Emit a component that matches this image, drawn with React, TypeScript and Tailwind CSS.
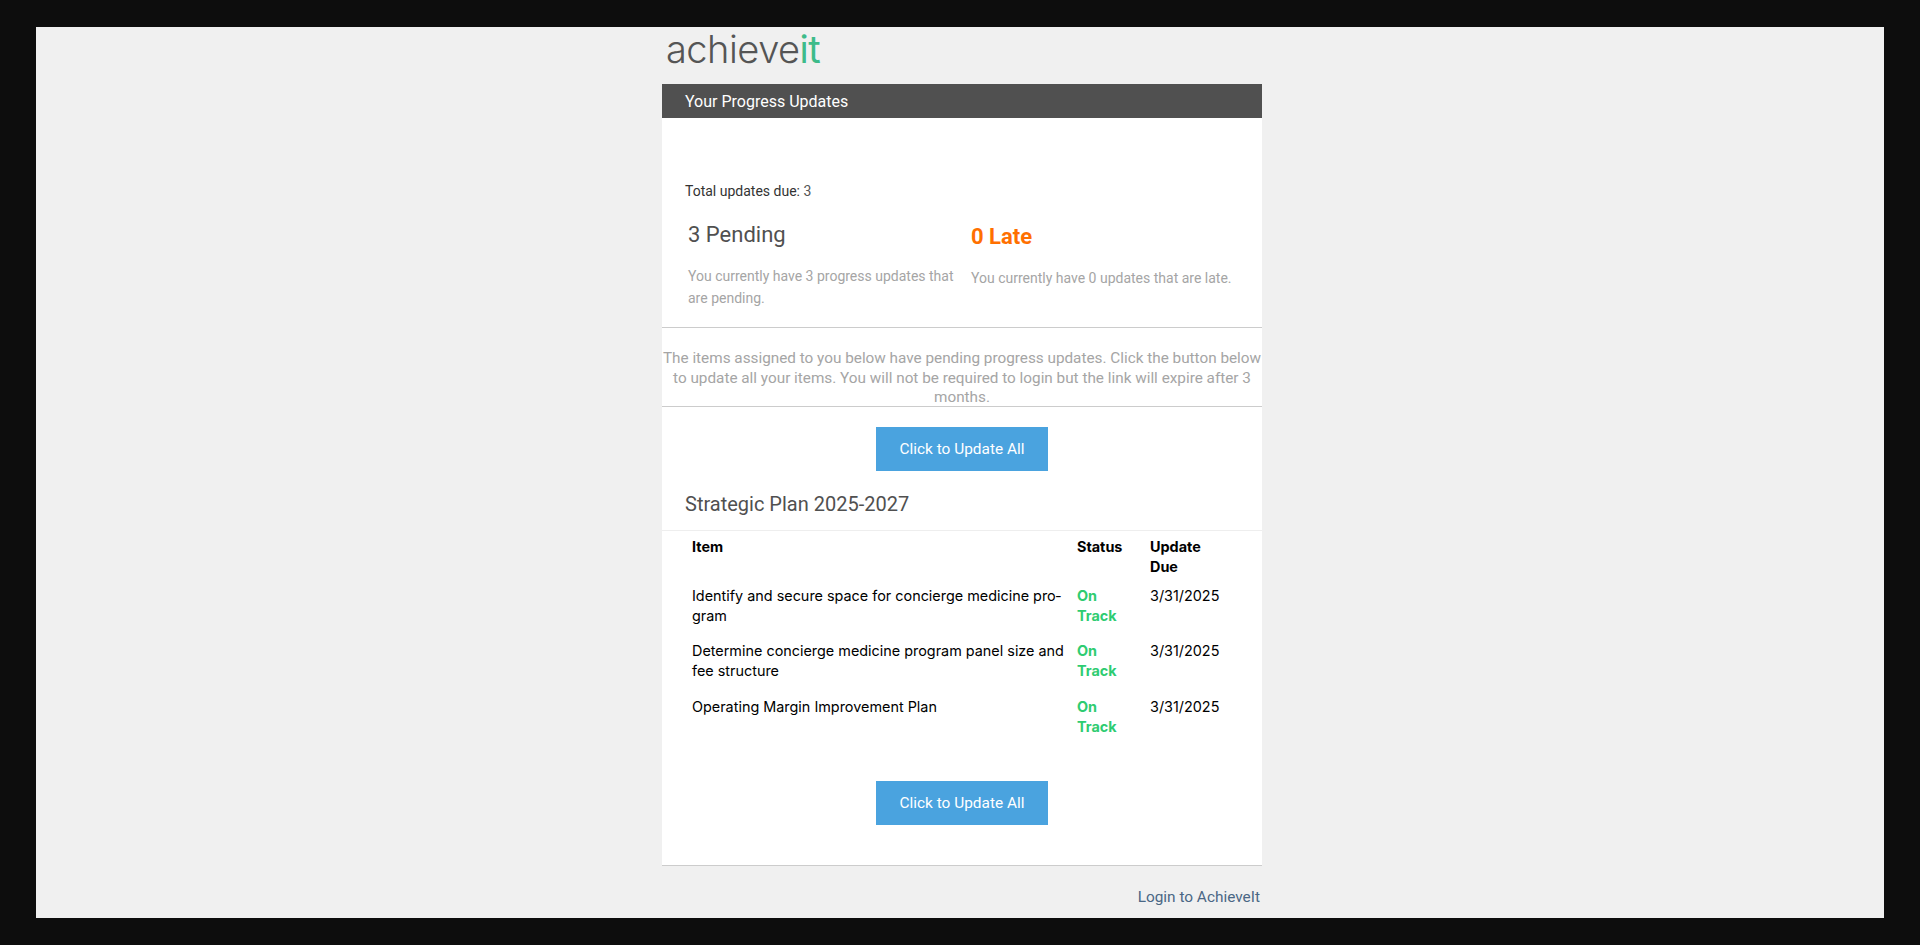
const rows = [
  ["Identify and secure space for concierge medicine pro\u00ADgram", "3/31/2025"],
  ["Determine concierge medicine program panel size and fee structure", "3/31/2025"],
  ["Operating Margin Improvement Plan", "3/31/2025"],
];

function UpdateButton() {
  return (
    <div className="flex justify-center">
      <a className="flex h-[44px] w-[172px] items-center justify-center bg-[#4aa3df] pt-[2px] text-[15.4px] text-white">Click to Update All</a>
    </div>
  );
}

export default function App() {
  return (
    <div className="h-[945px] overflow-hidden bg-[#0d0d0d] px-[36px] pt-[27px] font-['Roboto',sans-serif]">
      <div className="h-[891px] overflow-hidden bg-[#f0f0f0]">
        <div className="ml-[626px] w-[600px]">
          <div className="flex h-[57px] items-start pl-[4px] font-['Inter',sans-serif] text-[38px] leading-[44px] font-light tracking-[-0.5px] text-[#555555]">
            <span>achieve</span><span className="font-normal text-[#3dbb8a]">it</span>
          </div>
          <div className="flex h-[34px] items-center bg-[#505050] pl-[23px] pt-[2px] text-[16px] text-white">Your Progress Updates</div>
          <div className="bg-white">
            <div className="h-[210px] border-b border-[#cccccc]">
              <div className="pl-[23px] pt-[63px] text-[14px] leading-[20px] text-[#333333]">Total updates due: <span className="text-[#555555]">3</span></div>
              <div className="flex pl-[26px] pt-[20px]">
                <div className="w-[283px] pr-[10px]">
                  <div className="text-[22px] leading-[28px] text-[#505050]">3 Pending</div>
                  <p className="mt-[16px] text-[14px] leading-[22px] text-[#a5a5a5]">You currently have 3 progress updates that are pending.</p>
                </div>
                <div className="pt-[2px]">
                  <div className="text-[22px] leading-[28px] font-bold text-[#ff7000]">0 Late</div>
                  <p className="mt-[16px] text-[14px] leading-[22px] text-[#a5a5a5]">You currently have 0 updates that are late.</p>
                </div>
              </div>
            </div>
            <div className="h-[79px] border-b border-[#cccccc] pt-[21px]">
              <p className="text-center text-[15.3px] leading-[19.5px] whitespace-nowrap text-[#a5a5a5]">
                The items assigned to you below have pending progress updates. Click the button below<br />
                to update all your items. You will not be required to login but the link will expire after 3<br />
                months.
              </p>
            </div>
            <div className="pt-[20px]"><UpdateButton /></div>
            <div className="flex h-[60px] items-center border-b border-[#eeeeee] pl-[23px] pt-[7px] text-[20px] text-[#505050]">Strategic Plan 2025-2027</div>
            <table className="ml-[23px] w-[545px] table-fixed border-collapse font-['Inter',sans-serif] text-[14.4px] leading-[20px] text-black">
              <thead>
                <tr className="text-left font-bold">
                  <th className="w-[385px] px-[7px] pt-[6px] pb-[1px] align-top">Item</th>
                  <th className="w-[73px] px-[7px] pt-[6px] pb-[1px] align-top">Status</th>
                  <th className="px-[7px] pt-[6px] pb-[1px] align-top">Update Due</th>
                </tr>
              </thead>
              <tbody>
                {rows.map(([item, due]) => (
                  <tr key={item} className="align-top">
                    <td className="pl-[7px] pr-[3px] pt-[8px] pb-[7.4px] hyphens-manual">{item}</td>
                    <td className="px-[7px] pt-[8px] pb-[7.4px] font-bold text-[#2ecc71]">On Track</td>
                    <td className="px-[7px] pt-[8px] pb-[7.4px]">{due}</td>
                  </tr>
                ))}
              </tbody>
            </table>
            <div className="pt-[36.8px] pb-[40px]"><UpdateButton /></div>
          </div>
          <div className="border-t border-[#cccccc] pt-[21px] pr-[2px] text-right text-[15.4px] leading-[20px] text-[#4a6785]">Login to AchieveIt</div>
        </div>
      </div>
    </div>
  );
}
